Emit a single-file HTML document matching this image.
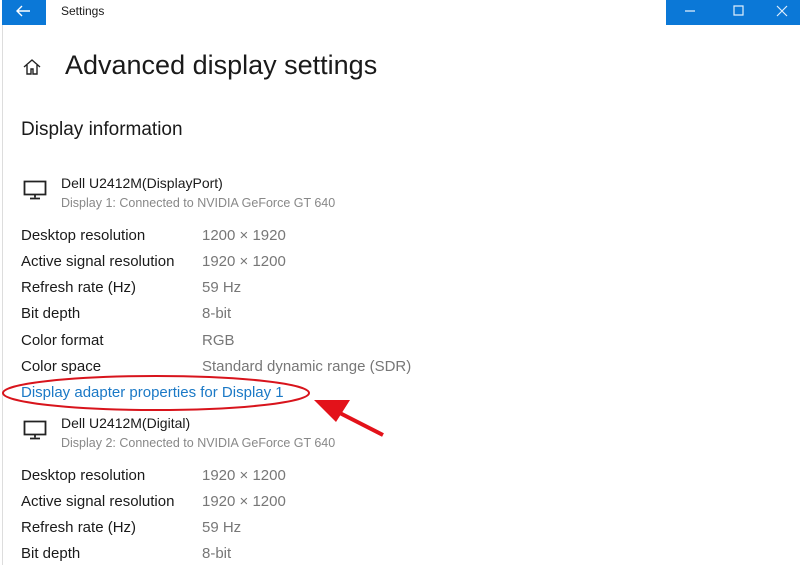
<!DOCTYPE html><html><head><style>
body{margin:0;width:800px;height:565px;background:#fff;font-family:"Liberation Sans",sans-serif;position:relative;overflow:hidden;color:#1a1a1a}
.a{position:absolute;white-space:nowrap}
.l{left:21px;font-size:15px}
.v{left:202px;font-size:15px;color:#777}
.s{left:61px;font-size:12.5px;color:#888}
</style></head><body>
<div class="a" style="left:2px;top:0;width:1px;height:565px;background:#ddd"></div>
<div class="a" style="left:2px;top:0;width:44px;height:25px;background:#0b78d7"></div>
<svg class="a" style="left:14px;top:4px" width="18" height="14"><path d="M16 7H3M8 2L3 7l5 5" stroke="#fff" stroke-width="1.4" fill="none"/></svg>
<div class="a" style="left:61px;top:4px;font-size:12px">Settings</div>
<div class="a" style="left:666px;top:0;width:134px;height:25px;background:#0b78d7"></div>
<svg class="a" style="left:666px;top:0" width="134" height="25"><path d="M19 11h10M68 6h9v9h-9zM111 6l10 10M121 6l-10 10" stroke="#dfeefb" stroke-width="1.2" fill="none"/></svg>
<svg class="a" style="left:22px;top:58px" width="20" height="18"><path d="M2 9L10 2l8 7M5 7v9h4v-5h2v5h4V7" stroke="#222" stroke-width="1.4" fill="none"/></svg>
<div class="a" style="left:65px;top:50px;font-size:27px">Advanced display settings</div>
<div class="a" style="left:21px;top:119px;font-size:19px">Display information</div>
<svg class="a" style="left:23px;top:180px" width="26" height="20"><path d="M1.5 1.5h21v13h-21zM12 14.5v3M7 18.5h10" stroke="#222" stroke-width="1.8" fill="none"/></svg>
<div class="a" style="left:61px;top:175px;font-size:14px">Dell U2412M(DisplayPort)</div>
<div class="a s" style="top:196px">Display 1: Connected to NVIDIA GeForce GT 640</div>
<div class="a l" style="top:227px">Desktop resolution</div><div class="a v" style="top:227px">1200 × 1920</div>
<div class="a l" style="top:253px">Active signal resolution</div><div class="a v" style="top:253px">1920 × 1200</div>
<div class="a l" style="top:279px">Refresh rate (Hz)</div><div class="a v" style="top:279px">59 Hz</div>
<div class="a l" style="top:305px">Bit depth</div><div class="a v" style="top:305px">8-bit</div>
<div class="a l" style="top:332px">Color format</div><div class="a v" style="top:332px">RGB</div>
<div class="a l" style="top:358px">Color space</div><div class="a v" style="top:358px">Standard dynamic range (SDR)</div>
<div class="a l" style="top:384px;color:#1b79c6;font-size:15px">Display adapter properties for Display 1</div>
<svg class="a" style="left:0;top:370px" width="400" height="80"><ellipse cx="156" cy="23" rx="153" ry="17" stroke="#d8141c" stroke-width="2" fill="none"/><path d="M383 65L330 38" stroke="#e3121a" stroke-width="4"/><path d="M314 30l36 0l-14 22z" fill="#e3121a"/></svg>
<svg class="a" style="left:23px;top:420px" width="26" height="20"><path d="M1.5 1.5h21v13h-21zM12 14.5v3M7 18.5h10" stroke="#222" stroke-width="1.8" fill="none"/></svg>
<div class="a" style="left:61px;top:415px;font-size:14px">Dell U2412M(Digital)</div>
<div class="a s" style="top:436px">Display 2: Connected to NVIDIA GeForce GT 640</div>
<div class="a l" style="top:467px">Desktop resolution</div><div class="a v" style="top:467px">1920 × 1200</div>
<div class="a l" style="top:493px">Active signal resolution</div><div class="a v" style="top:493px">1920 × 1200</div>
<div class="a l" style="top:519px">Refresh rate (Hz)</div><div class="a v" style="top:519px">59 Hz</div>
<div class="a l" style="top:545px">Bit depth</div><div class="a v" style="top:545px">8-bit</div>
</body></html>
